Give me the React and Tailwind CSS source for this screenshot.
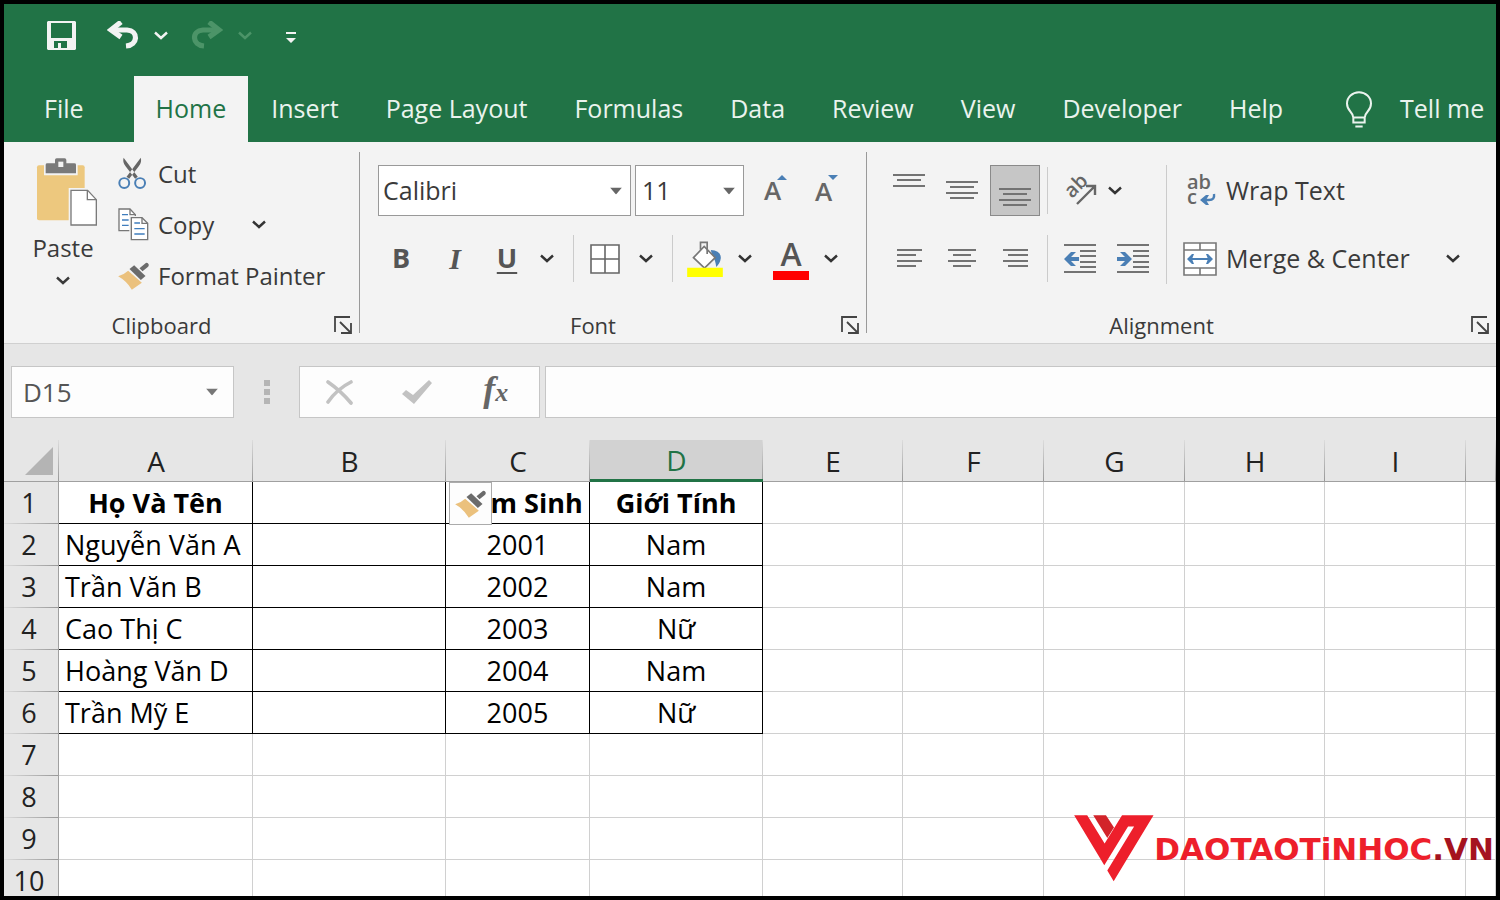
import clsx from "clsx";

const tabs = ["Insert", "Page Layout", "Formulas", "Data", "Review", "View", "Developer", "Help"];

const columns = [
  { name: "A", width: "w-[194px]" },
  { name: "B", width: "w-[193px]" },
  { name: "C", width: "w-[144px]" },
  { name: "D", width: "w-[173px]" },
  { name: "E", width: "w-[140px]" },
  { name: "F", width: "w-[141px]" },
  { name: "G", width: "w-[141px]" },
  { name: "H", width: "w-[140px]" },
  { name: "I", width: "w-[141px]" },
  { name: "", width: "" },
];

const rows = [
  ["Họ Và Tên", "", "Năm Sinh", "Giới Tính"],
  ["Nguyễn Văn A", "", "2001", "Nam"],
  ["Trần Văn B", "", "2002", "Nam"],
  ["Cao Thị C", "", "2003", "Nữ"],
  ["Hoàng Văn D", "", "2004", "Nam"],
  ["Trần Mỹ E", "", "2005", "Nữ"],
  [],
  [],
  [],
  [],
];

/* ---------- small shared pieces ---------- */

function Chevron({ className }) {
  return (
    <svg viewBox="0 0 14 9" className={clsx("h-[9px] w-[14px]", className)} fill="none" stroke="currentColor" strokeWidth="2.4">
      <path d="M1 1.5l6 5.5 6-5.5" />
    </svg>
  );
}

function MenuButton({ label, className, children }) {
  return (
    <button aria-label={label} className={clsx("flex items-center justify-center text-[#333]", className)}>
      {children || <Chevron />}
    </button>
  );
}

function Divider({ className }) {
  return <div className={clsx("my-0.5 w-px self-stretch bg-[#cbcbcb]", className)} />;
}

function ComboBox({ label, value, className, selectClass, arrowClass }) {
  return (
    <div className={clsx("relative", className)}>
      <select
        aria-label={label}
        defaultValue={value}
        className={clsx("h-full w-full appearance-none rounded-none border outline-none", selectClass)}
      >
        <option>{value}</option>
      </select>
      <svg viewBox="0 0 12 7" className={clsx("pointer-events-none absolute top-1/2 h-[7px] w-3 -translate-y-1/2", arrowClass)}>
        <path d="M0 0h12L6 7z" fill="currentColor" />
      </svg>
    </div>
  );
}

function Group({ label, className, children }) {
  return (
    <section aria-label={label} className={clsx("flex flex-col", className)}>
      {children}
      <div className="mt-auto flex h-9 items-center">
        <span className="flex-1 text-center text-[22px] text-[#3a3a3a]">{label}</span>
        <button aria-label={`${label} settings`} className="flex w-10 justify-end pr-[7px]">
          <svg viewBox="0 0 18 18" className="size-[18px]" fill="none" stroke="#444" strokeWidth="1.8">
            <path d="M1 16V1h15M6 6l10 10M17 7v10H7" />
          </svg>
        </button>
      </div>
    </section>
  );
}

/* ---------- icons ---------- */

function PasteIcon() {
  return (
    <svg viewBox="113 38 186 204" className="h-[68px] w-[62px]">
      <rect x="116" y="60" width="143" height="165" rx="6" fill="#edc87e" />
      <path d="M137 50h101v40H137z" fill="#f3f3f3" />
      <path d="M142 58q0-4 5-4h23V44q0-5 5-5h24q5 0 5 5v10h24q5 0 5 4v26h-91z" fill="#7a7a7a" />
      <rect x="180" y="49" width="15" height="16" fill="#f3f3f3" />
      <path d="M211 128h60l28 28v86h-88z" fill="#f3f3f3" />
      <path d="M218 135h50l26 28v76h-76z" fill="#fff" stroke="#7a7a7a" strokeWidth="4" />
      <path d="M267 135v28h27" fill="none" stroke="#7a7a7a" strokeWidth="4" />
    </svg>
  );
}

function CutIcon() {
  return (
    <svg viewBox="353 34 88 98" className="h-[33px] w-[29px]">
      <path d="M370 35q-4 14 6 26l29 38 8-6zM422 35q4 14-6 26l-29 38-8-6z" fill="#666" />
      <circle cx="372" cy="112" r="15" fill="none" stroke="#4a7fb5" strokeWidth="6" />
      <circle cx="420" cy="112" r="15" fill="none" stroke="#4a7fb5" strokeWidth="6" />
    </svg>
  );
}

function CopyIcon() {
  return (
    <svg viewBox="352 186 93 99" className="h-[33px] w-[31px]" fill="#fff" stroke="#777" strokeWidth="4">
      <path d="M355 189h33l16 17v48h-49z" />
      <path d="M388 189v17h16" fill="none" />
      <path d="M364 206h18M364 222h20M364 238h20" stroke="#3f7dbd" />
      <path d="M386 210h60v78h-60z" fill="#f3f3f3" stroke="none" />
      <path d="M392 215h32l17 17v49h-49z" />
      <path d="M424 215v17h17" fill="none" />
      <path d="M401 231h17M401 248h31M401 264h31" stroke="#3f7dbd" />
    </svg>
  );
}

function BrushIcon() {
  return (
    <svg viewBox="355 345 92 84" className="h-7 w-[31px]">
      <path d="M355 388q18-6 30-17l41 36-30 21q-16-26-41-40z" fill="#ebc17d" />
      <path d="M389 366l14-11 34 32-14 12z" fill="#6b6b6b" />
      <path d="M419 364l19-16q6-2 9 5 0 5-4 8l-15 12z" fill="#6b6b6b" />
    </svg>
  );
}

function LinesIcon({ lines, className }) {
  // each line is [x, y, width]
  return (
    <svg viewBox="0 0 34 34" className={clsx("size-[34px]", className)} fill="#737373">
      {lines.map(([x, y, w]) => (
        <rect key={y} x={x} y={y} width={w} height="2" />
      ))}
    </svg>
  );
}

const alignIcons = {
  top: [[1, 0, 32], [5, 5, 24], [1, 11, 32]],
  middle: [[1, 7, 32], [5, 12, 24], [1, 18, 32], [5, 23, 24]],
  bottom: [[1, 14, 32], [5, 19, 24], [1, 25, 32], [5, 30, 24]],
  left: [[5, 7, 25], [5, 12, 19], [5, 18, 25], [5, 23, 19]],
  center: [[3, 7, 28], [8, 12, 18], [3, 18, 28], [8, 23, 18]],
  right: [[5, 7, 25], [10, 12, 20], [5, 18, 25], [10, 23, 20]],
};

function IndentIcon({ flip }) {
  return (
    <svg viewBox="0 0 32 30" className="h-[30px] w-8" fill="#737373">
      <path d="M0 0h32v2H0zM16 6h16v2H16zM16 11h16v2H16zM16 17h16v2H16zM16 22h16v2H16zM0 27h32v2H0z" />
      {flip ? (
        <path d="M0 13h8L3 8h5l7 7-7 7H3l5-5H0z" fill="#4a7fb5" />
      ) : (
        <path d="M15 13H7l5-5H7l-7 7 7 7h5l-5-5h8z" fill="#4a7fb5" />
      )}
    </svg>
  );
}

function OrientationIcon() {
  return (
    <svg viewBox="0 0 34 32" className="h-8 w-[34px] overflow-visible">
      <text x="9" y="24" transform="rotate(-45 9 24)" fontFamily="Open Sans" fontSize="20" fontWeight="600" fill="#666">ab</text>
      <path d="M14 29L31 12M23 11h9v9" fill="none" stroke="#666" strokeWidth="2.4" />
    </svg>
  );
}

function WrapIcon() {
  return (
    <svg viewBox="0 0 34 34" className="size-[34px] overflow-visible">
      <text x="4" y="15" fontFamily="Open Sans" fontSize="20" fontWeight="600" fill="#666">ab</text>
      <text x="4" y="30" fontFamily="Open Sans" fontSize="20" fontWeight="600" fill="#666">c</text>
      <path d="M31 20q1 6-5 6h-6" fill="none" stroke="#4a7fb5" strokeWidth="2.4" />
      <path d="M17 26l6-5h3l-3 5 3 5h-3z" fill="#4a7fb5" />
    </svg>
  );
}

function MergeIcon() {
  return (
    <svg viewBox="0 0 34 34" className="size-[34px]" fill="#fff" stroke="#777" strokeWidth="1.6">
      <path d="M1 1h32v32H1zM1 8h32M1 26h32M17 1v7M17 26v7" />
      <path d="M5 17h24" stroke="#4a7fb5" strokeWidth="2" />
      <path d="M4 17l5-5h2l-2 5 2 5H9zM30 17l-5-5h-2l2 5-2 5h2z" fill="#4a7fb5" stroke="none" />
    </svg>
  );
}

function FillIcon() {
  return (
    <svg viewBox="172 286 107 108" className="h-9 w-9">
      <path d="M243 313q30 2 30 24-2 16-14 27-2-22-12-34z" fill="#4a7fb5" />
      <path d="M191 336l32-34 33 34-32 31z" fill="#fff" stroke="#777" strokeWidth="5" />
      <path d="M212 312v-22h20v35" fill="none" stroke="#777" strokeWidth="5" />
      <path d="M172 366h107v28H172z" fill="#ff0" />
    </svg>
  );
}

/* ---------- page sections ---------- */

function QuickAccess() {
  return (
    <div className="flex h-[72px] items-center pb-2.5 pl-[43px] text-[#f3f3f3]">
      <button aria-label="Save">
        <svg viewBox="0 0 29 29" className="size-[29px]">
          <path fillRule="evenodd" fill="currentColor" d="M1 0h27v0l1 1v27l-1 1H1l-1-1V1zM4 2v15h21V2zM7 20v7h4v-5h3v5h6v-7z" />
        </svg>
      </button>
      <button aria-label="Undo" className="ml-[31px]">
        <svg viewBox="0 0 32 28" className="h-7 w-8" fill="none" stroke="currentColor" strokeWidth="5.2">
          <path d="M4 9h16c12 1 11 15-1 16" />
          <path d="M14 1L4 9l10 7" />
        </svg>
      </button>
      <button aria-label="Undo history" className="ml-[15px]">
        <Chevron />
      </button>
      <button aria-label="Redo" className="ml-[23px] text-[#4c9468]">
        <svg viewBox="0 0 32 28" className="h-7 w-8" fill="none" stroke="currentColor" strokeWidth="5.2">
          <path d="M28 9H12c-12 1-11 15 1 16" />
          <path d="M18 1l10 8-10 7" />
        </svg>
      </button>
      <button aria-label="Redo history" className="ml-[15px] text-[#4c9468]">
        <Chevron />
      </button>
      <button aria-label="Customize toolbar" className="ml-[34px] pt-1.5">
        <svg viewBox="0 0 10 12" className="h-3 w-2.5" fill="currentColor">
          <path d="M0 0h10v2H0zM0 6h10l-5 5z" />
        </svg>
      </button>
    </div>
  );
}

function RibbonTabs() {
  return (
    <nav className="flex h-[66px] items-stretch pl-4 text-[25px] whitespace-nowrap text-[#eaf3ee]">
      <button className="px-6">File</button>
      <button aria-current="page" className="ml-[26px] bg-[#f3f3f3] px-[22px] text-[#217346]">
        Home
      </button>
      <div className="flex items-stretch gap-px">
        {tabs.map((tab) => (
          <button key={tab} className="px-[23px]">
            {tab}
          </button>
        ))}
      </div>
      <button className="flex items-center gap-7 pl-10">
        <svg viewBox="446 92 78 110" className="h-[37px] w-[26px]" fill="none" stroke="currentColor" strokeWidth="6">
          <path d="M468 186v-14q0-9-9-19-10-11-10-24a36 34 0 0 1 72 0q0 13-10 24-9 10-9 19v14zM468 171h34M474 198h22" />
        </svg>
        Tell me
      </button>
    </nav>
  );
}

function ClipboardGroup() {
  return (
    <Group label="Clipboard" className="w-[355px]">
      <div className="flex pt-1.5 pl-6 text-2xl text-[#3a3a3a]">
        <button className="flex w-[70px] flex-col items-center pt-2.5">
          <span className="self-end">
            <PasteIcon />
          </span>
          <span className="mt-1.5 leading-8">Paste</span>
          <Chevron className="mt-3" />
        </button>
        <div className="ml-5 flex flex-col">
          <button className="flex h-[51px] items-center gap-[11px]">
            <CutIcon />
            Cut
          </button>
          <div className="flex h-[51px] items-center">
            <button className="flex items-center gap-[9px]">
              <CopyIcon />
              Copy
            </button>
            <MenuButton label="Copy options" className="ml-[38px]" />
          </div>
          <button className="flex h-[51px] items-center gap-[9px] whitespace-nowrap">
            <BrushIcon />
            Format Painter
          </button>
        </div>
      </div>
    </Group>
  );
}

function FontGroup() {
  return (
    <Group label="Font" className="w-[506px] pt-[23px]">
      <div className="flex h-[51px] items-stretch pl-[18px] text-[#3a3a3a]">
        <ComboBox label="Font name" value="Calibri" className="w-[253px]" selectClass="border-[#999] bg-white pl-1 text-[25px]" arrowClass="right-[9px] text-[#666]" />
        <ComboBox label="Font size" value="11" className="ml-1 w-[109px]" selectClass="border-[#999] bg-white pl-1.5 text-[25px]" arrowClass="right-[9px] text-[#666]" />
        <button aria-label="Increase font size" className="ml-5 flex w-[27px] items-start pt-2 text-[26px] leading-[34px] font-semibold text-[#666]">
          A
          <svg viewBox="0 0 10 5" className="mt-0.5 -ml-1 h-[5px] w-2.5 shrink-0"><path d="M0 5l5-5 5 5z" fill="#4a7fb5" /></svg>
        </button>
        <button aria-label="Decrease font size" className="ml-6 flex w-[27px] items-start pt-2 text-[26px] leading-[36px] font-semibold text-[#666]">
          A
          <svg viewBox="0 0 10 5" className="mt-0.5 -ml-1 h-[5px] w-2.5 shrink-0"><path d="M0 0l5 5 5-5z" fill="#4a7fb5" /></svg>
        </button>
      </div>
      <div className="mt-[17px] flex h-[51px] items-stretch pl-[14px] text-[27px] text-[#555]">
        <button className="w-[54px] font-bold">B</button>
        <button className="w-[54px] font-['Liberation_Serif',serif] text-[30px] font-bold italic">I</button>
        <button className="w-[50px] font-bold underline decoration-2 underline-offset-4">U</button>
        <MenuButton label="Underline options" className="w-[30px]" />
        <div className="w-[11px]" />
        <Divider />
        <MenuButton label="Borders" className="w-[62px]">
          <svg viewBox="0 0 30 30" className="size-[30px]" fill="#fff" stroke="#666" strokeWidth="1.6">
            <path d="M1 1h28v28H1zM15 1v28M1 15h28" />
          </svg>
        </MenuButton>
        <MenuButton label="Border options" className="w-[20px]" />
        <div className="w-4" />
        <Divider />
        <MenuButton label="Fill color" className="w-16">
          <FillIcon />
        </MenuButton>
        <MenuButton label="Fill color options" className="w-4" />
        <MenuButton label="Font color" className="ml-2 w-[60px]">
          <span className="flex h-[42px] w-9 items-start justify-center border-b-9 border-[#f00] text-[32px] leading-8 font-semibold text-[#555]">A</span>
        </MenuButton>
        <MenuButton label="Font color options" className="w-[20px]" />
      </div>
    </Group>
  );
}

function AlignmentGroup() {
  const box = "flex h-[51px] w-[50px] items-center justify-center";
  return (
    <Group label="Alignment" className="min-w-0 flex-1 pt-[23px]">
      <div className="flex text-[25px] whitespace-nowrap text-[#3a3a3a]">
        <div className="flex flex-col gap-[17px] pl-[17px]">
          <div className="flex items-center gap-[3px]">
            <button aria-label="Top align" className={box}><LinesIcon lines={alignIcons.top} /></button>
            <button aria-label="Middle align" className={box}><LinesIcon lines={alignIcons.middle} /></button>
            <button aria-label="Bottom align" aria-pressed="true" className={clsx(box, "border border-[#8a8a8a] bg-[#c6c6c6]")}>
              <LinesIcon lines={alignIcons.bottom} />
            </button>
            <Divider className="ml-1" />
            <button aria-label="Orientation" className={clsx(box, "ml-1")}><OrientationIcon /></button>
            <MenuButton label="Orientation options" />
          </div>
          <div className="flex items-center gap-[3px]">
            <button aria-label="Align left" className={box}><LinesIcon lines={alignIcons.left} /></button>
            <button aria-label="Center" className={box}><LinesIcon lines={alignIcons.center} /></button>
            <button aria-label="Align right" className={box}><LinesIcon lines={alignIcons.right} /></button>
            <Divider className="ml-1" />
            <button aria-label="Decrease indent" className={clsx(box, "ml-1")}><IndentIcon /></button>
            <button aria-label="Increase indent" className={box}><IndentIcon flip /></button>
          </div>
        </div>
        <div className="ml-2 w-px bg-[#cbcbcb]" />
        <div className="flex flex-col gap-[17px] pl-4">
          <button className="flex h-[51px] items-center gap-[9px]">
            <WrapIcon />
            Wrap Text
          </button>
          <div className="flex h-[51px] items-center">
            <button className="flex items-center gap-[9px]">
              <MergeIcon />
              Merge &amp; Center
            </button>
            <MenuButton label="Merge options" className="ml-9" />
          </div>
        </div>
      </div>
    </Group>
  );
}

function FormulaBar() {
  return (
    <div className="flex h-24 shrink-0 items-stretch py-[22px] pl-[7px]">
      <ComboBox label="Name box" value="D15" className="w-[223px]" selectClass="border-[#c6c6c6] bg-[#fdfdfd] pl-[11px] text-[26px] text-[#555]" arrowClass="right-4 text-[#777]" />
      <div className="flex w-[65px] flex-col items-center justify-center gap-[3px]">
        <span className="size-1.5 bg-[#b5b5b5]" />
        <span className="size-1.5 bg-[#b5b5b5]" />
        <span className="size-1.5 bg-[#b5b5b5]" />
      </div>
      <div className="flex w-[241px] items-stretch border border-[#c6c6c6] bg-[#fdfdfd] text-[#c2c2c2]">
        <button aria-label="Cancel" className="flex flex-1 items-center justify-center">
          <svg viewBox="0 0 28 26" className="h-[26px] w-7" fill="none" stroke="currentColor" strokeLinecap="round">
            <path d="M3 3q13 9 23 21" strokeWidth="3.6" />
            <path d="M26 3Q12 10 3 23" strokeWidth="3.6" />
          </svg>
        </button>
        <button aria-label="Enter" className="flex flex-1 items-center justify-center">
          <svg viewBox="0 0 30 26" className="h-[26px] w-[30px]" fill="currentColor">
            <path d="M0 15l4-4 7 5L27 1l3 3-18 21z" />
          </svg>
        </button>
        <button aria-label="Insert function" className="flex-1 pr-1 pb-1 font-['Liberation_Serif',serif] text-[#666] italic">
          <span className="text-[36px] leading-10 font-bold">f</span>
          <span className="text-[26px] font-bold">x</span>
        </button>
      </div>
      <input aria-label="Formula" className="ml-[5px] min-w-0 flex-1 border border-r-0 border-[#c6c6c6] bg-[#fdfdfd] px-2 text-[26px] outline-none" />
    </div>
  );
}

function Sheet() {
  return (
    <table className="w-full table-fixed border-separate border-spacing-0 text-[27px] leading-10 whitespace-nowrap text-black">
      <colgroup>
        <col className="w-[55px]" />
        {columns.map((col, i) => (
          <col key={i} className={col.width} />
        ))}
      </colgroup>
      <thead>
        <tr className="h-[42px]">
          <th aria-label="Select all" className="border-b border-[#a0a0a0] bg-[linear-gradient(to_bottom,#dcdcdc,#999)] bg-[length:1px_100%] bg-right bg-no-repeat p-0">
            <svg viewBox="0 0 28 28" className="ml-[21px] size-7">
              <path d="M28 0v28H0z" fill="#b4b4b4" />
            </svg>
          </th>
          {columns.map((col, i) => (
            <th
              key={i}
              scope="col"
              className={clsx(
                "bg-[linear-gradient(to_bottom,#dcdcdc,#999)] bg-[length:1px_100%] bg-right bg-no-repeat p-0 text-[28px] leading-[38px] font-normal",
                col.name === "D" ? "border-b-3 border-[#217346] bg-[#d2d2d2] text-[#217346]" : "border-b border-[#a0a0a0] text-[#222]"
              )}
            >
              {col.name}
            </th>
          ))}
        </tr>
      </thead>
      <tbody>
        {rows.map((row, r) => (
          <tr key={r} className="h-[42px]">
            <th
              scope="row"
              className="border-r border-[#a0a0a0] bg-[linear-gradient(to_right,#dcdcdc,#999)] bg-[length:100%_1px] bg-bottom bg-no-repeat p-0 pr-1 font-normal text-[#222]"
            >
              {r + 1}
            </th>
            {columns.map((col, c) => (
              <td
                key={c}
                className={clsx(
                  "relative border-r border-b bg-white p-0",
                  r < 6 && c < 4 ? "border-black" : "border-[#d0d0d0]",
                  c === 0 && r > 0 ? "pl-1.5" : "text-center",
                  r === 0 && "font-bold"
                )}
              >
                {row[c]}
                {r === 0 && c === 2 && (
                  <button aria-label="Paste options" className="absolute top-0 left-[3px] z-10 flex size-[43px] items-center justify-center border border-[#ababab] bg-[#fdfdfd]">
                    <BrushIcon />
                  </button>
                )}
              </td>
            ))}
          </tr>
        ))}
      </tbody>
    </table>
  );
}

function Watermark() {
  return (
    <div className="pointer-events-none absolute right-0.5 bottom-3.5 flex items-center">
      <svg viewBox="42 77 238 200" className="h-[67px] w-20">
        <path d="M99 78h38l24 36-20 32z" fill="#d2232a" />
        <path d="M42 78h39l52 84 52-84h94L160 275l-19-32 80-132h-18l-71 116z" fill="#ed1f2b" />
      </svg>
      <span className="font-['DejaVu_Sans',sans-serif] text-[31px] leading-9 font-bold text-[#ed1f2b]">
        DAOTAOTiNHOC<span className="text-[#a5131f]">.VN</span>
      </span>
    </div>
  );
}

export default function App() {
  return (
    <div className="flex h-screen flex-col overflow-hidden border-4 border-black bg-[#e6e6e6] font-['Open_Sans',sans-serif]">
      <header className="shrink-0 bg-[#217346]">
        <QuickAccess />
        <RibbonTabs />
      </header>
      <div className="flex h-[202px] shrink-0 items-stretch border-b border-[#d0d0d0] bg-[#f3f3f3]">
        <ClipboardGroup />
        <div className="my-2.5 w-px bg-[#999]" />
        <FontGroup />
        <div className="my-2.5 w-px bg-[#999]" />
        <AlignmentGroup />
      </div>
      <FormulaBar />
      <main className="relative min-h-0 flex-1 overflow-hidden">
        <Sheet />
        <Watermark />
      </main>
    </div>
  );
}
